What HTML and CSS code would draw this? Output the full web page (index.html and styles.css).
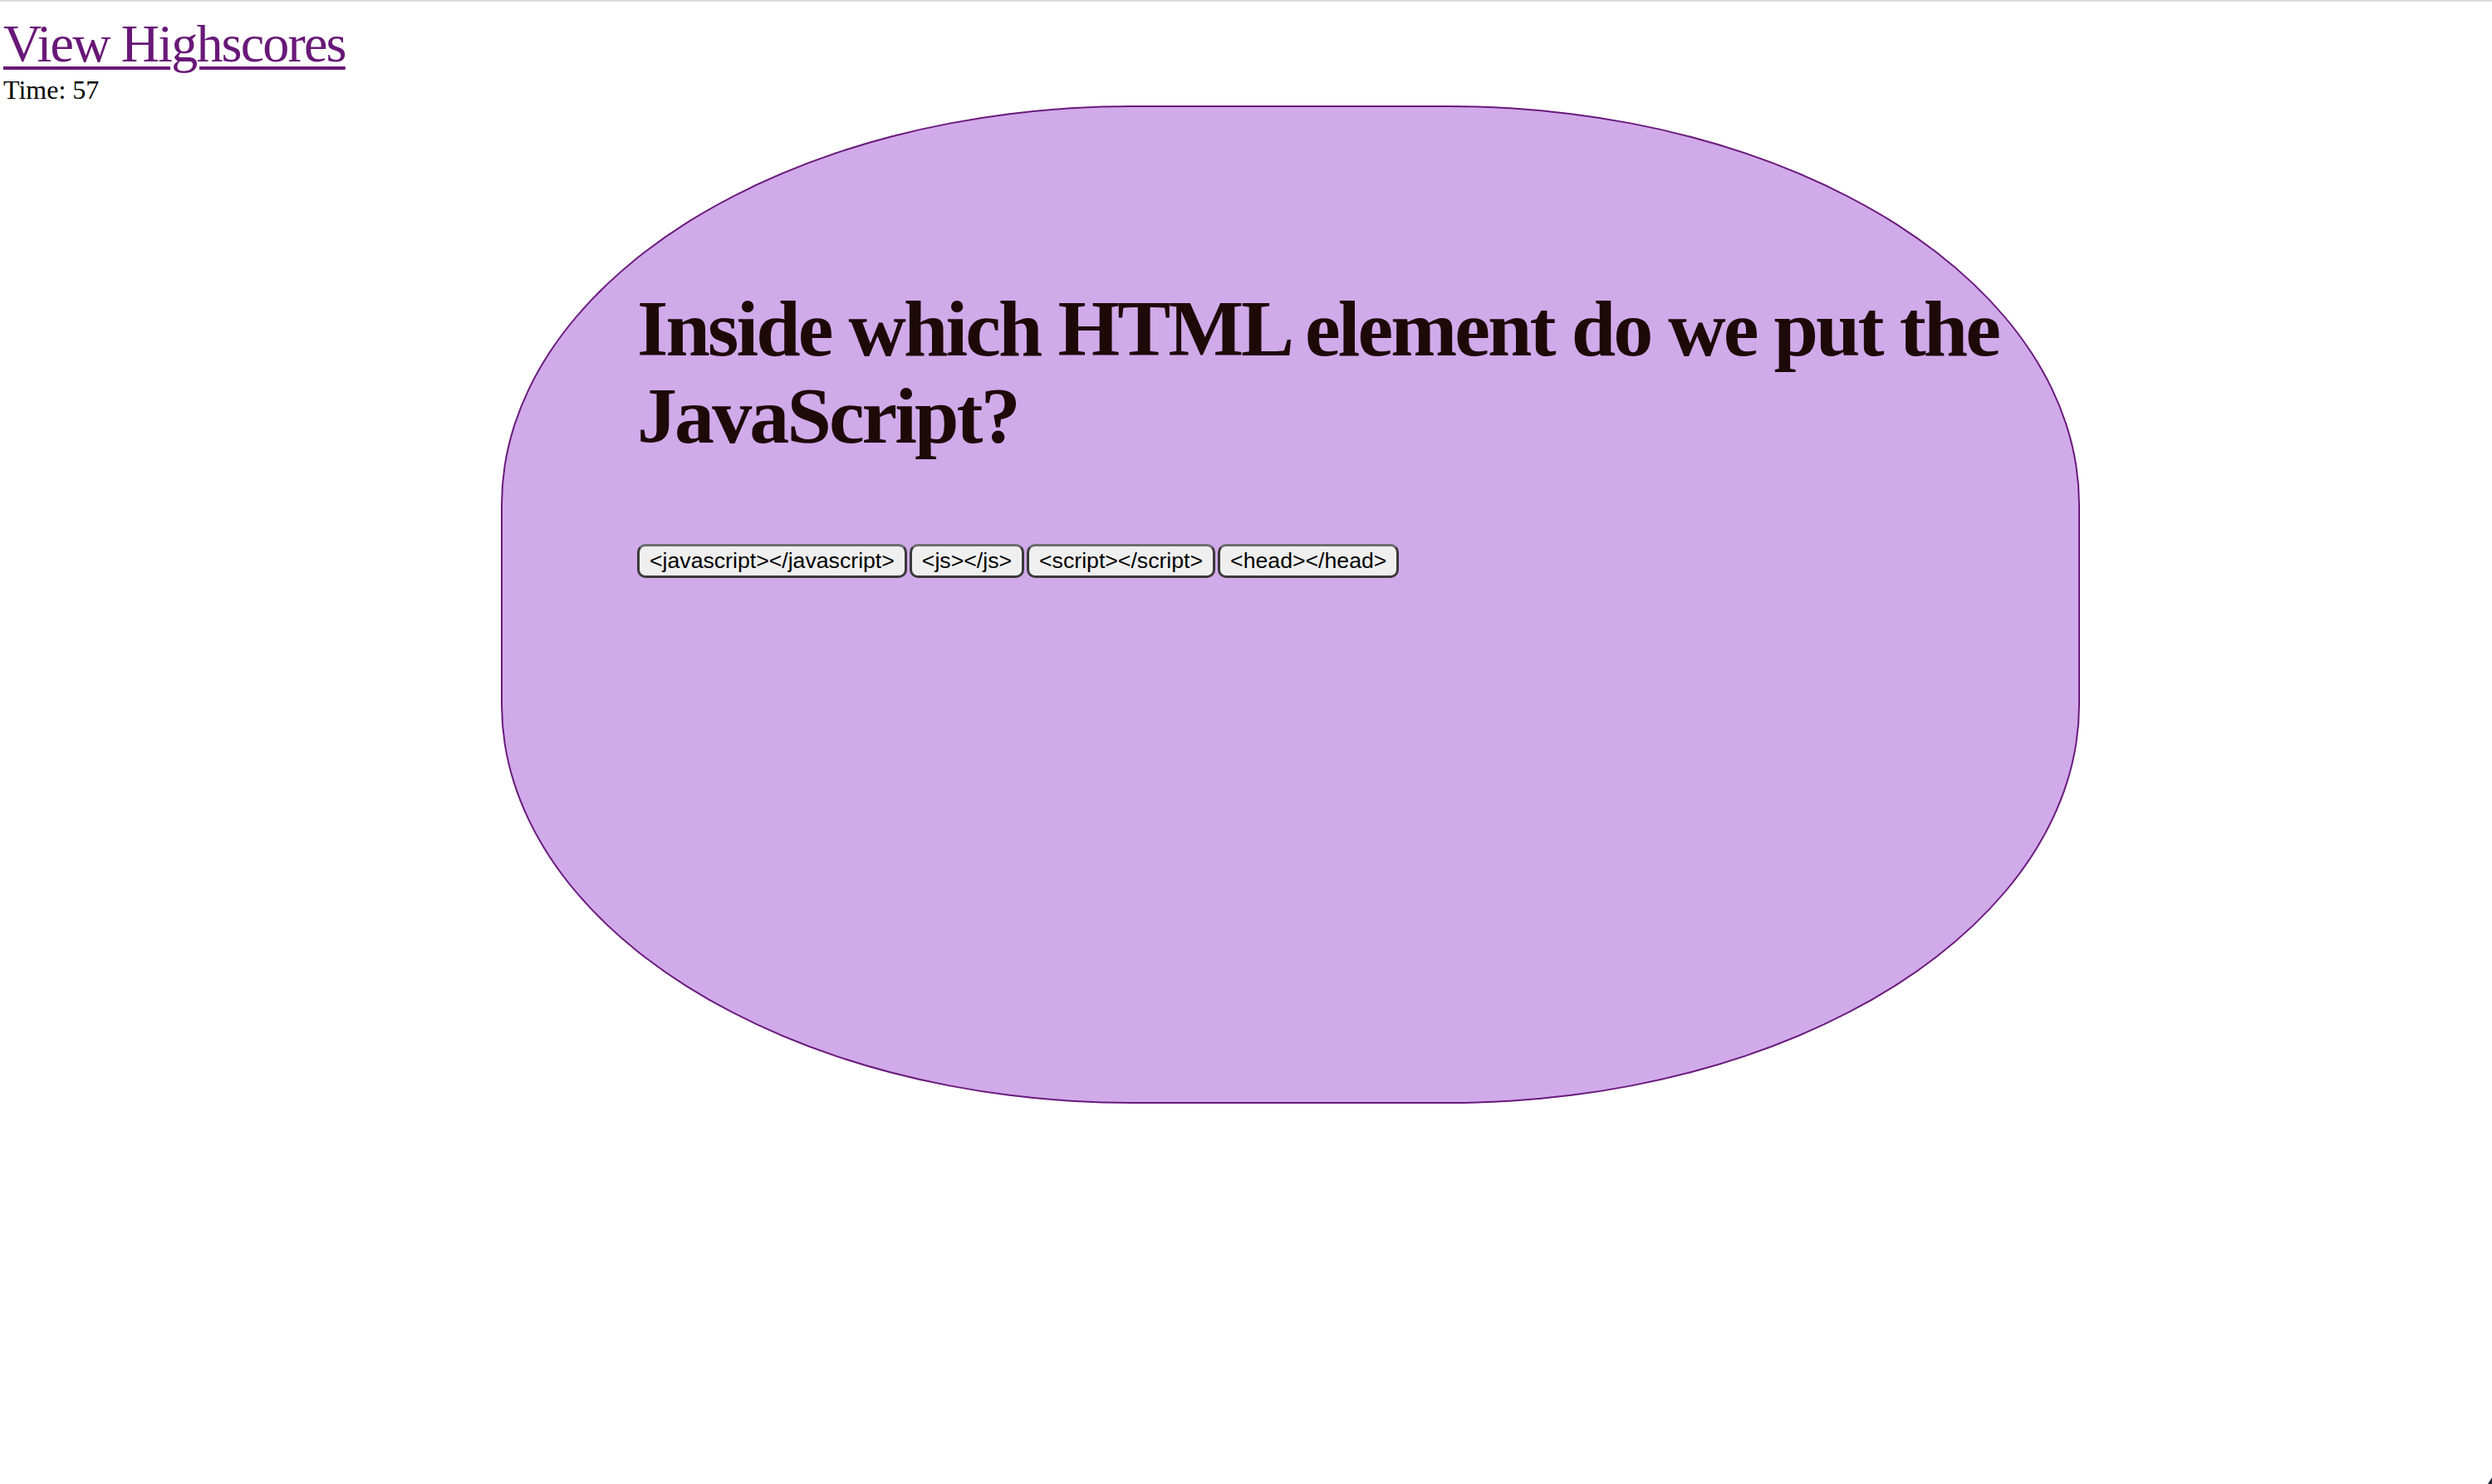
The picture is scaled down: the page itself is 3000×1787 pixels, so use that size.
FILE: index.html
```html
<!DOCTYPE html>
<html lang="en">
<head>
<meta charset="utf-8">
<title>Code Quiz</title>
<link rel="stylesheet" href="styles.css">
</head>
<body>
<header class="top">
  <a class="scores-link" href="#">View Highscores</a>
  <div class="timer">Time: 57</div>
</header>
<main class="quiz">
  <h1 class="question">Inside which HTML element do we put the JavaScript?</h1>
  <div class="answers">
    <button class="answer">&lt;javascript&gt;&lt;/javascript&gt;</button>
    <button class="answer">&lt;js&gt;&lt;/js&gt;</button>
    <button class="answer">&lt;script&gt;&lt;/script&gt;</button>
    <button class="answer">&lt;head&gt;&lt;/head&gt;</button>
  </div>
</main>
<div class="corner"></div>
</body>
</html>
```
FILE: styles.css
```css
html, body {
  margin: 0;
  padding: 0;
  background: #ffffff;
}

body {
  font-family: "Liberation Serif", "Times New Roman", serif;
  font-size: 32px;
  color: #000000;
  border-top: 2px solid #dddde1;
  min-height: 1785px;
  box-sizing: border-box;
}

.top {
  padding: 14px 0 0 4px;
}

.scores-link {
  font-size: 64px;
  letter-spacing: -1.8px;
  color: #681877;
  text-decoration: underline;
  text-decoration-thickness: 4px;
  text-underline-offset: 6px;
}

.timer {
  font-size: 32px;
  line-height: 36.8px;
}

.quiz {
  box-sizing: border-box;
  width: 1901px;
  height: 1202px;
  margin-left: 603px;
  padding: 150px 20px 0 162px;
  background: #d1aaea;
  border: 2px solid #6a1a7c;
  border-radius: 40%;
}

.question {
  margin: 64px 0 0 0;
  font-size: 96px;
  line-height: 105.6px;
  font-weight: bold;
  letter-spacing: -2.9px;
  color: #1e0909;
}

.answers {
  display: flex;
  gap: 3px;
  margin-top: 101px;
}

.answer {
  box-sizing: border-box;
  height: 41px;
  padding: 0 12px;
  font-family: "Liberation Sans", Arial, sans-serif;
  font-size: 26.67px;
  color: #000000;
  background: #efefef;
  border: 3px solid #3a3a3a;
  border-top-color: #6e6e6e;
  border-radius: 10px;
  cursor: pointer;
}

.corner {
  position: fixed;
  right: 0;
  bottom: 0;
  width: 0;
  height: 0;
  border-left: 5px solid transparent;
  border-bottom: 8px solid #1f2433;
}
```
